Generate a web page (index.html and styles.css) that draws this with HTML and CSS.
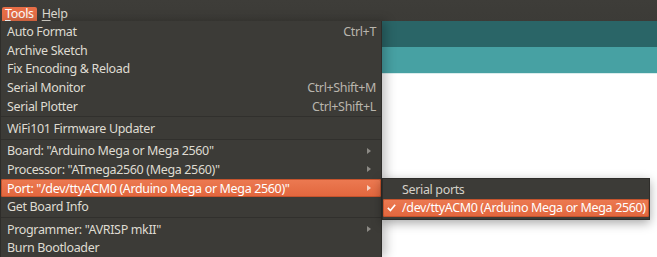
FILE: index.html
```html
<!DOCTYPE html>
<html>

<head>
    <meta charset="UTF-8">
    <title>Tools menu</title>
    <link rel="stylesheet" href="styles.css">
</head>

<body>
    <div class="menubar">
        <span class="menubar-item active"><u>T</u>ools</span>
        <span class="menubar-item"><u>H</u>elp</span>
    </div>

    <div class="main">
        <div class="menu">
            <div class="menu-item"><span>Auto Format</span><span class="shortcut">Ctrl+T</span></div>
            <div class="menu-item"><span>Archive Sketch</span></div>
            <div class="menu-item"><span>Fix Encoding &amp; Reload</span></div>
            <div class="menu-item"><span>Serial Monitor</span><span class="shortcut">Ctrl+Shift+M</span></div>
            <div class="menu-item"><span>Serial Plotter</span><span class="shortcut">Ctrl+Shift+L</span></div>
            <div class="separator"></div>
            <div class="menu-item"><span>WiFi101 Firmware Updater</span></div>
            <div class="separator"></div>
            <div class="menu-item"><span>Board: "Arduino Mega or Mega 2560"</span><span class="arrow"></span></div>
            <div class="menu-item"><span>Processor: "ATmega2560 (Mega 2560)"</span><span class="arrow"></span></div>
            <div class="menu-item selected">
                <span>Port: "/dev/ttyACM0 (Arduino Mega or Mega 2560)"</span><span class="arrow"></span>

                <div class="submenu">
                    <div class="submenu-label">Serial ports</div>
                    <div class="submenu-item selected">
                        <svg class="check" viewBox="0 0 12 12" fill="none" stroke="currentColor" stroke-width="1.8">
                            <path d="M2 6.5l2.8 2.8L10 3" />
                        </svg>
                        <span>/dev/ttyACM0 (Arduino Mega or Mega 2560)</span>
                    </div>
                </div>
            </div>
            <div class="menu-item"><span>Get Board Info</span></div>
            <div class="separator"></div>
            <div class="menu-item"><span>Programmer: "AVRISP mkII"</span><span class="arrow"></span></div>
            <div class="menu-item"><span>Burn Bootloader</span></div>
        </div>

        <div class="editor">
            <div class="toolbar"></div>
            <div class="tabs"></div>
            <div class="sketch"></div>
        </div>
    </div>
</body>

</html>
```

FILE: styles.css
```css
:root {
    --menu-bg: #3c3b37;
    --menu-text: #dfdbd2;
    --menu-dim: #b9b5ad;
    --orange: #e76e47;
    --orange-dark: #c5532d;
    --teal-dark: #2a6567;
    --teal-light: #47a1a3;
}

body {
    margin: 0;
    width: 657px;
    height: 257px;
    overflow: hidden;
    background-color: var(--menu-bg);
    font-family: "Noto Sans", "Open Sans", sans-serif;
    font-size: 12.5px;
    letter-spacing: -0.35px;
    color: var(--menu-text);
}

.menubar {
    display: flex;
    align-items: flex-end;
    gap: 2px;
    height: 21px;
    padding-left: 2px;
    background: linear-gradient(#3e3d39, #3c3b37);
}

.menubar-item {
    height: 14px;
    line-height: 14px;
    padding: 0 3px 0 3px;
}

.menubar-item u {
    text-decoration-thickness: 1px;
    text-underline-offset: 2px;
}

.menubar-item.active {
    background-color: var(--orange);
    color: #fff;
    border-radius: 2px 2px 0 0;
}

.main {
    display: flex;
    height: 236px;
}

/* Menu deroulant */
.menu {
    width: 380px;
    padding-top: 1px;
    border-left: 1px solid #2e2d2a;
    border-right: 1px solid #2e2d2a;
    background-color: var(--menu-bg);
    box-shadow: 4px 0 10px rgba(0, 0, 0, 0.25);
    position: relative;
    z-index: 2;
}

.menu-item {
    display: flex;
    align-items: center;
    justify-content: space-between;
    height: 18.7px;
    padding: 0 5px 0 6px;
    position: relative;
    white-space: nowrap;
}

.menu-item.selected {
    background: linear-gradient(#ec7a52, #e2663d);
    box-shadow: inset 0 0 0 1px var(--orange-dark);
    color: #fff;
    border-radius: 2px;
}

.shortcut {
    color: var(--menu-dim);
}

.arrow {
    width: 0;
    height: 0;
    margin-right: 5px;
    border-top: 3px solid transparent;
    border-bottom: 3px solid transparent;
    border-left: 4px solid #8c8a85;
}

.menu-item.selected .arrow {
    border-left-color: #f7d4c6;
}

.separator {
    height: 1px;
    margin: 1px 0 0.6px;
    border-top: 1px solid #31302d;
}

/* Sous-menu */
.submenu {
    position: absolute;
    left: 381px;
    top: -1px;
    width: 266px;
    padding: 1px 0 2px;
    background-color: var(--menu-bg);
    border: 1px solid #2e2d2a;
    box-shadow: 0 3px 10px rgba(0, 0, 0, 0.35);
    color: var(--menu-text);
}

.submenu-label {
    height: 19px;
    line-height: 19px;
    padding-left: 19px;
    color: #d4d0c8;
}

.submenu-item {
    display: flex;
    align-items: center;
    gap: 5px;
    height: 18px;
    padding-left: 3px;
}

.submenu-item.selected {
    background: linear-gradient(#ec7a52, #e2663d);
    box-shadow: inset 0 0 0 1px var(--orange-dark);
    color: #fff;
    border-radius: 2px;
}

.check {
    flex-shrink: 0;
    width: 11px;
    height: 11px;
}

/* Fenetre de l'editeur */
.editor {
    flex: 1;
    display: flex;
    flex-direction: column;
}

.toolbar {
    height: 26px;
    background-color: var(--teal-dark);
}

.tabs {
    height: 26px;
    background-color: var(--teal-light);
}

.sketch {
    flex: 1;
    background-color: #fff;
    border-top: 1px solid #d9ecec;
}
```
